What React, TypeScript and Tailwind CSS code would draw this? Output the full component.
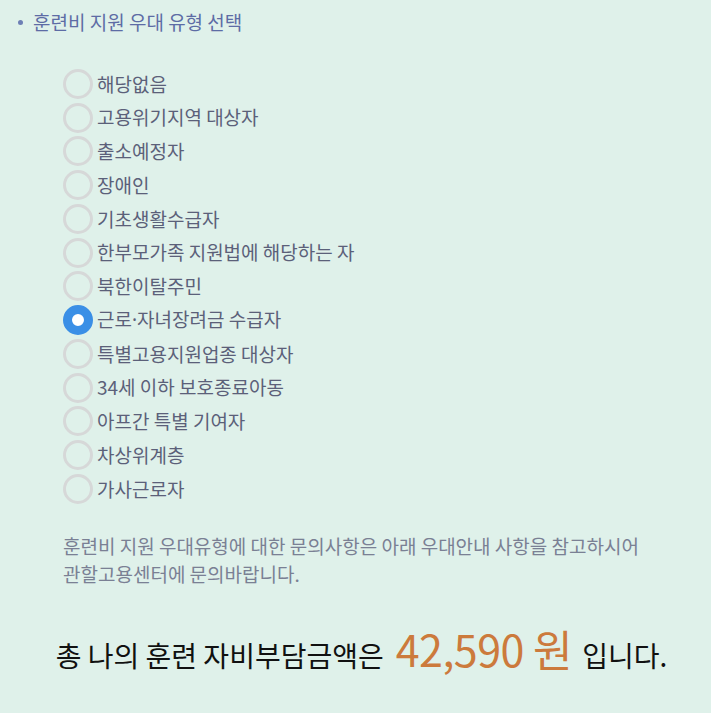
import React from "react";

const items = [
  "해당없음",
  "고용위기지역 대상자",
  "출소예정자",
  "장애인",
  "기초생활수급자",
  "한부모가족 지원법에 해당하는 자",
  "북한이탈주민",
  "근로·자녀장려금 수급자",
  "특별고용지원업종 대상자",
  "34세 이하 보호종료아동",
  "아프간 특별 기여자",
  "차상위계층",
  "가사근로자",
];

function Label({ text }: { text: string }) {
  if (!text.includes("·")) return <>{text}</>;
  const [a, b] = text.split("·");
  return (
    <>
      {a}
      <span style={{ fontFamily: '"Noto Sans", sans-serif' }}>·</span>
      {b}
    </>
  );
}

export default function App() {
  const checked = 7;
  return (
    <div
      className="w-[711px] h-[713px] bg-[#dff1ea] overflow-hidden"
      style={{ fontFamily: '"Noto Sans CJK KR", "Noto Sans", sans-serif' }}
    >
      <div className="flex items-center pl-[18px] pt-[7px] h-[30px] box-content">
        <span className="w-[5px] h-[5px] rounded-full bg-[#6d7fb5] mr-[10px]" />
        <span className="text-[19px] leading-[30px] text-[#5d6ca5]">훈련비 지원 우대 유형 선택</span>
      </div>
      <div className="pl-[63px] pt-[30px] flex flex-col">
        {items.map((t, i) => (
          <div key={t} className="flex items-center h-[33.75px]">
            {i === checked ? (
              <span className="w-[30px] h-[30px] rounded-full border-[9px] border-[#3a8fe6] bg-white shrink-0" />
            ) : (
              <span className="w-[30px] h-[30px] rounded-full border-[3px] border-[#d6d8d8] shrink-0" />
            )}
            <span className="ml-[4px] text-[19px] text-[#5b6079] whitespace-nowrap">
              <Label text={t} />
            </span>
          </div>
        ))}
      </div>
      <div className="pl-[63px] pt-[26px] text-[19px] leading-[28px] text-[#7a8094]">
        <p>훈련비 지원 우대유형에 대한 문의사항은 아래 우대안내 사항을 참고하시어</p>
        <p>관할고용센터에 문의바랍니다.</p>
      </div>
      <div className="flex items-baseline justify-center pt-[28px] pl-[12px]">
        <span className="text-[28px] text-[#111]">총 나의 훈련 자비부담금액은</span>
        <span className="text-[43px] text-[#cc7a3c] ml-[12px] mr-[10px] tracking-[-0.5px]">42,590 원</span>
        <span className="text-[28px] text-[#111]">입니다.</span>
      </div>
    </div>
  );
}
